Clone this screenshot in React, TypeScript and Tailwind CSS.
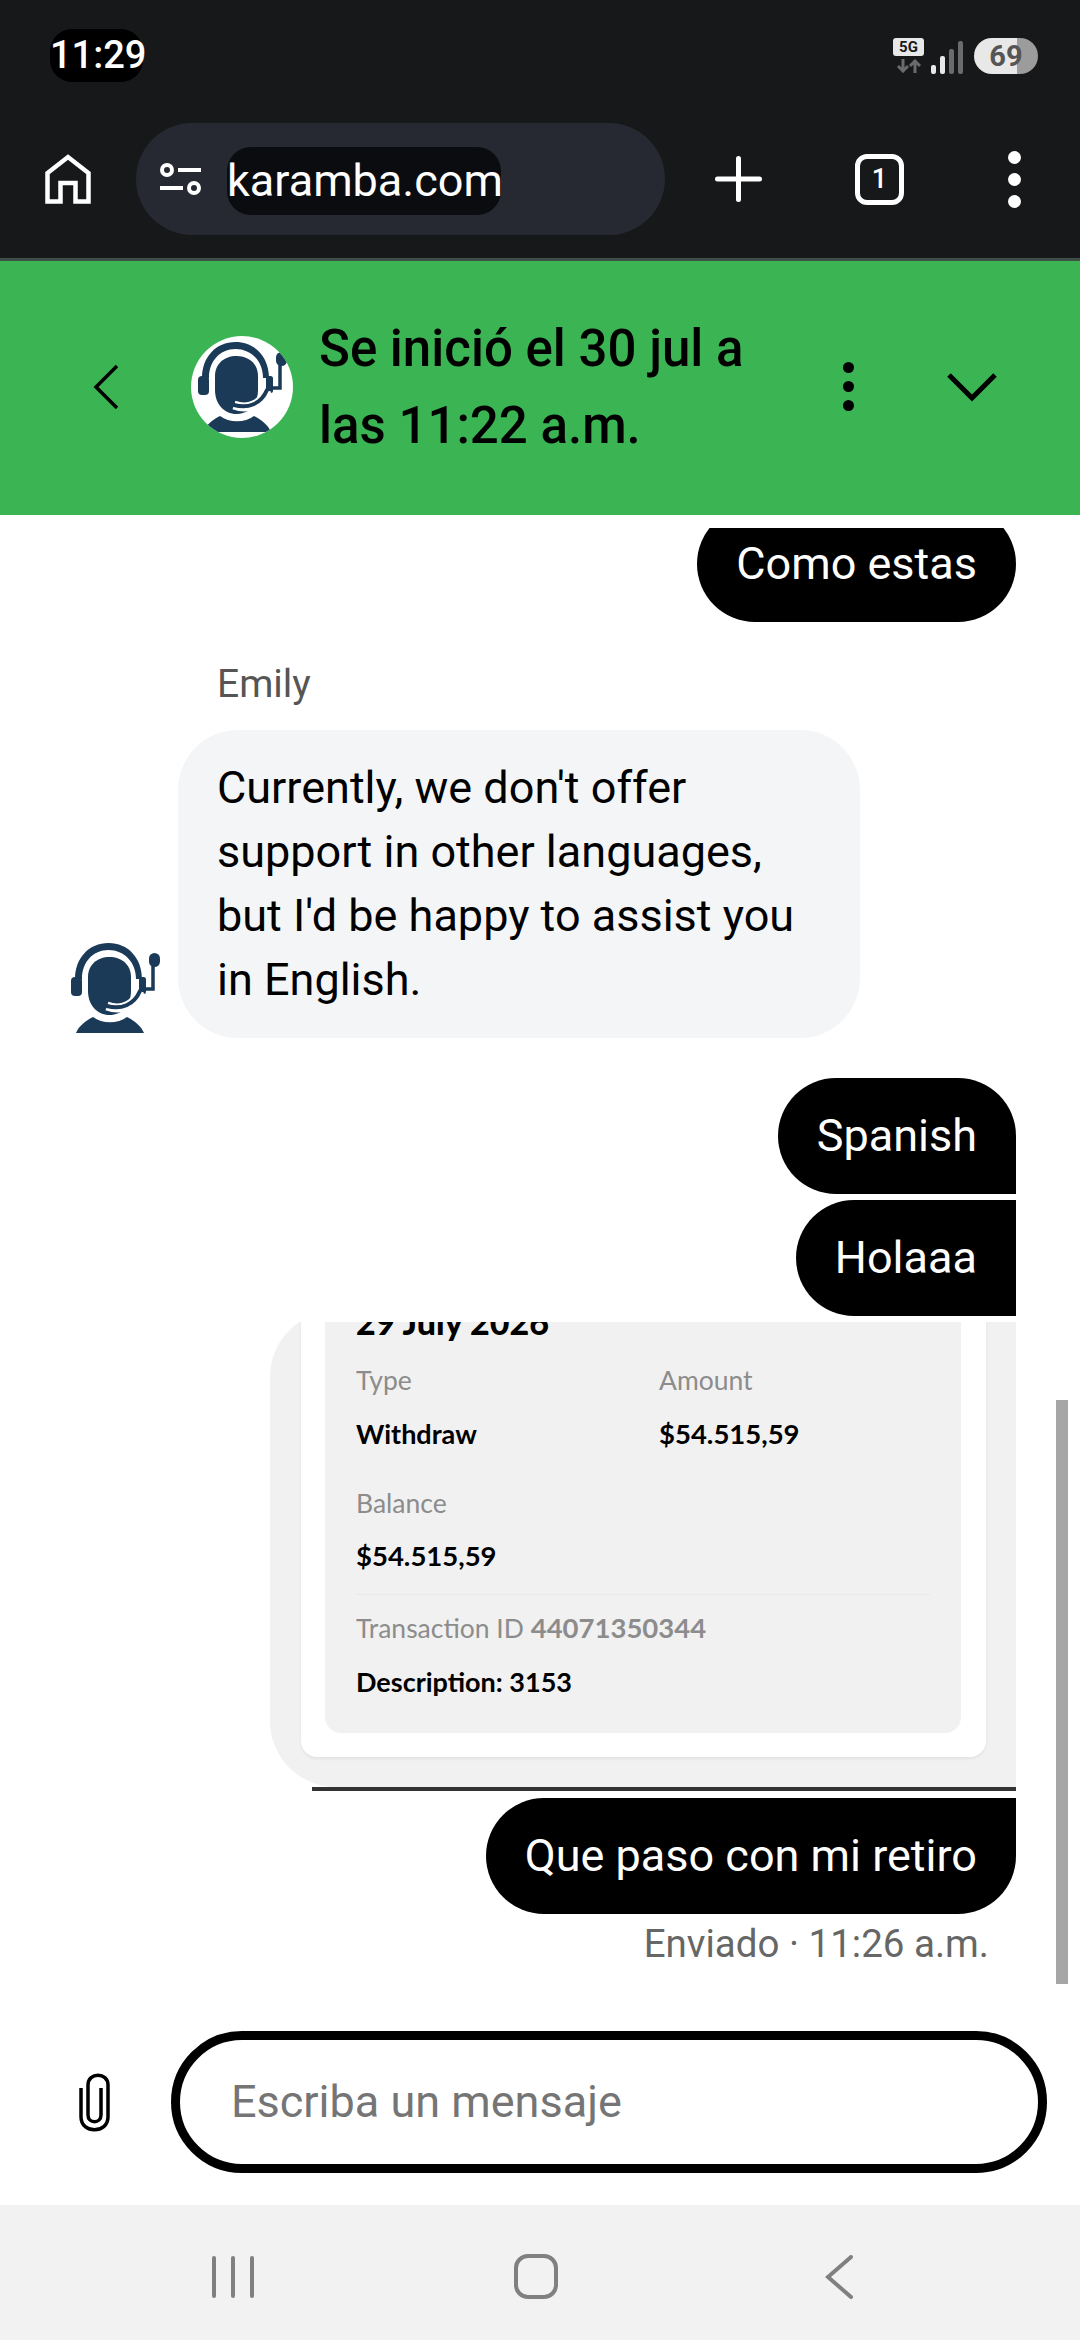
const ROBOTO = "font-['Roboto',sans-serif]";

function AgentIcon({ className }: { className?: string }) {
  return (
    <svg viewBox="0 0 90 90" className={className} fill="#1a3a57">
      {/* headband */}
      <path d="M5 36C5 15 19 0 38.500 0S72 15 72 36h-6C66 19 54 7 38.500 7S12 19 12 36z" />
      {/* ear cups */}
      <rect x="1" y="34" width="11" height="19" rx="4" />
      <rect x="69" y="34" width="7" height="17" rx="2.500" />
      {/* head */}
      <path d="M18 34c0-12 9-20 21.500-20S61 22 61 34v14c0 14-9 24-21.500 24S18 62 18 48z" />
      {/* mic boom */}
      <path d="M37 63c14 5 27 0 33-15" fill="none" stroke="#fff" strokeWidth="9" />
      <path d="M37 63c14 4 27-1 33-15" fill="none" stroke="#1a3a57" strokeWidth="4" strokeLinecap="round" />
      <path d="M74 46h9V22" fill="none" stroke="#1a3a57" strokeWidth="3.500" />
      <rect x="79" y="10" width="11" height="14" rx="5.500" />
      {/* shoulders */}
      <path d="M6 90c3-7 9-12 17-16 9 7 25 7 34 0 8 4 14 9 17 16z" />
    </svg>
  );
}

function HomeIcon() {
  return (
    <svg viewBox="0 0 46 50" className="w-[46px] h-[50px]" fill="none" stroke="#fff" strokeWidth="4.5">
      <path d="M2.500 47.500V19L23 3l20.500 16v28.500H30.500V29h-15v18.500z" />
    </svg>
  );
}

function TuneIcon() {
  return (
    <svg viewBox="0 0 41 34" className="w-[41px] h-[34px]" fill="none" stroke="#fff" strokeWidth="4">
      <circle cx="7" cy="8" r="5" />
      <path d="M18 8h23" />
      <circle cx="34" cy="26" r="5" />
      <path d="M0 26h23" />
    </svg>
  );
}

function StatusIcons() {
  return (
    <div className="flex items-start">
      <div className="w-[31px] flex flex-col items-center">
        <div className="w-[31px] h-[18px] rounded-[3px] bg-[#e8e8e8] text-[#17181a] text-[15px] leading-[18px] font-bold text-center font-['Roboto',sans-serif]">
          5G
        </div>
        <svg viewBox="0 0 24 14" className="w-[24px] h-[14px] mt-[3px]" fill="none" stroke="#6b6b6b" strokeWidth="3">
          <path d="M6 0v12M1 7l5 5 5-5M18 14V2M13 7l5-5 5 5" />
        </svg>
      </div>
      <div className="flex items-end gap-[4px] ml-[7px] h-[34px] mt-[2px]">
        <div className="w-[5px] h-[9px] rounded-[2px] bg-[#e8e8e8]" />
        <div className="w-[5px] h-[18px] rounded-[2px] bg-[#e8e8e8]" />
        <div className="w-[5px] h-[25px] rounded-[2px] bg-[#6b6b6b]" />
        <div className="w-[5px] h-[33px] rounded-[2px] bg-[#6b6b6b]" />
      </div>
      <div className="ml-[11px] w-[64px] h-[36px] rounded-full overflow-hidden flex relative">
        <div className="w-[43px] bg-[#e8e8e8]" />
        <div className="flex-1 bg-[#9c9c9c]" />
        <span className="absolute inset-0 text-center text-[#555] text-[29px] leading-[36px] font-bold font-['Roboto',sans-serif]">
          69
        </span>
      </div>
    </div>
  );
}

function BrowserBar() {
  return (
    <div className={`bg-[#17181a] h-[261px] border-b-[3px] border-[#3e4f47] text-white ${ROBOTO}`}>
      <div className="flex items-center justify-between pl-[50px] pr-[42px] pt-[29px]">
        <div className="w-[93px] h-[53px] rounded-[22px] bg-black text-center text-[38px] leading-[53px] font-medium">
          11:29
        </div>
        <StatusIcons />
      </div>
      <div className="flex items-center mt-[41px] pl-[45px]">
        <HomeIcon />
        <div className="ml-[45px] w-[529px] h-[112px] rounded-full bg-[#262932] flex items-center pl-[24px]">
          <TuneIcon />
          <div className="ml-[26px] mt-[3px] w-[274px] h-[68px] rounded-[24px] bg-[#0b0c10] text-center text-[45px] leading-[68px] whitespace-nowrap">
            karamba.com
          </div>
        </div>
        <svg viewBox="0 0 47 46" className="ml-[50px] w-[47px] h-[46px]" fill="none" stroke="#fff" strokeWidth="5" strokeLinecap="round">
          <path d="M23.500 2.500v41M2.500 23h42" />
        </svg>
        <div className="ml-[93px] w-[49px] h-[51px] rounded-[12px] border-[5px] border-white text-center text-[27px] leading-[41px] font-medium">
          1
        </div>
        <div className="ml-[104px] flex flex-col gap-[9px]">
          <div className="w-[13px] h-[13px] rounded-full bg-white" />
          <div className="w-[13px] h-[13px] rounded-full bg-white" />
          <div className="w-[13px] h-[13px] rounded-full bg-white" />
        </div>
      </div>
    </div>
  );
}

function ChatHeader() {
  return (
    <div className={`bg-[#3bb454] h-[254px] pb-[3px] flex items-center text-black ${ROBOTO}`}>
      <svg viewBox="0 0 26 46" className="ml-[93px] w-[26px] h-[46px]" fill="none" stroke="#000" strokeWidth="3.500">
        <path d="M24 2L3 23l21 21" />
      </svg>
      <div className="ml-[72px] w-[102px] h-[102px] rounded-full bg-white flex items-center justify-center overflow-hidden">
        <AgentIcon className="w-[90px] h-[92px]" />
      </div>
      <div className="ml-[26px] w-[524px] text-[51px] leading-[77px] font-medium">
        Se inició el 30 jul a<br />las 11:22 a.m.
      </div>
      <div className="flex flex-col gap-[8px]">
        <div className="w-[11px] h-[11px] rounded-full bg-black" />
        <div className="w-[11px] h-[11px] rounded-full bg-black" />
        <div className="w-[11px] h-[11px] rounded-full bg-black" />
      </div>
      <svg viewBox="0 0 50 30" className="ml-[93px] w-[50px] h-[30px]" fill="none" stroke="#000" strokeWidth="5">
        <path d="M2 3l23 23L48 3" />
      </svg>
    </div>
  );
}

function UserBubble({ children, className }: { children: string; className: string }) {
  return (
    <div className={`self-end bg-black text-white text-[45px] leading-[116px] h-[116px] px-[39px] whitespace-nowrap ${className}`}>
      {children}
    </div>
  );
}

function TransactionCard() {
  return (
    <div className="self-end shrink-0 mt-[6px] w-[746px] h-[469px] overflow-hidden font-['Lato',sans-serif] text-black flex flex-col">
      <div className="shrink-0 h-[476px] mt-[-11px] rounded-l-[66px] bg-[#f1f1f1] pl-[31px]">
        <div className="w-[685px] h-[446px] bg-white rounded-b-[16px] pl-[24px] shadow-[0_2px_3px_rgba(0,0,0,0.06)]">
          <div className="w-[636px] h-[422px] bg-[#f1f1f1] rounded-b-[16px] px-[31px] overflow-hidden">
            <div className="text-[34px] leading-[36px] font-black mt-[-7px]">29 July 2026</div>
            <div className="grid grid-cols-[303px_1fr] mt-[24px] text-[26.500px] leading-[32px]">
              <div className="text-[#8c8c8c]">Type</div>
              <div className="text-[#8c8c8c]">Amount</div>
              <div className="font-bold text-[27px] mt-[22px]">Withdraw</div>
              <div className="font-bold text-[27.500px] mt-[22px]">$54.515,59</div>
            </div>
            <div className="mt-[37px] text-[26.500px] leading-[32px] text-[#8c8c8c]">Balance</div>
            <div className="mt-[21px] text-[27.500px] leading-[32px] font-bold">$54.515,59</div>
            <div className="mt-[22px] h-[1px] bg-[#e9e9e9]" />
            <div className="mt-[17px] text-[26.500px] leading-[32px] text-[#8c8c8c]">
              Transaction ID <span className="font-bold text-[27.500px]">44071350344</span>
            </div>
            <div className="mt-[22px] text-[27px] leading-[32px] font-bold">Description: 3153</div>
          </div>
        </div>
      </div>
      <div className="shrink-0 h-[4px] ml-[42px] bg-[#333]" />
    </div>
  );
}

function Messages() {
  return (
    <div className={`relative h-[1490px] bg-white pt-[13px] ${ROBOTO}`}>
      <div className="h-full overflow-hidden pr-[64px] flex flex-col">
        <UserBubble className="shrink-0 mt-[-22px] rounded-[58px]">Como estas</UserBubble>
        <div className="mt-[38px] ml-[217px] text-[39px] leading-[48px] text-[#555]">Emily</div>
        <div className="mt-[22px] flex items-end">
          <AgentIcon className="ml-[70px] w-[90px] h-[90px] mb-[5px]" />
          <div className="ml-[18px] w-[682px] h-[308px] rounded-[60px] bg-[#f4f5f7] px-[39px] pt-[26px] text-[45px] leading-[64px] text-black">
            Currently, we don't offer support in other languages, but I'd be happy to assist you in English.
          </div>
        </div>
        <UserBubble className="shrink-0 mt-[40px] rounded-l-[58px] rounded-tr-[58px]">Spanish</UserBubble>
        <UserBubble className="shrink-0 mt-[6px] rounded-l-[58px]">Holaaa</UserBubble>
        <TransactionCard />
        <UserBubble className="shrink-0 mt-[7px] rounded-l-[58px] rounded-br-[58px]">Que paso con mi retiro</UserBubble>
        <div className="mt-[6px] self-end mr-[27px] text-[38.500px] leading-[48px] text-[#666]">Enviado · 11:26 a.m.</div>
      </div>
      {/* overlay scrollbar */}
      <div className="absolute right-[12px] top-[885px] w-[12px] h-[584px] bg-[#a6a6a6]" />
    </div>
  );
}

function Composer() {
  return (
    <div className={`bg-white h-[200px] pt-[26px] flex items-start ${ROBOTO}`}>
      <svg viewBox="0 0 31 59" className="ml-[79px] mt-[42px] w-[31px] h-[59px]" fill="none" stroke="#000" strokeWidth="3.500">
        <path d="M2 15v29c0 17 27 17 27 0V12C29-1 9-1 9 12v30c0 9 13 9 13 0V15" />
      </svg>
      <div className="ml-[61px] w-[876px] h-[142px] rounded-full border-[9px] border-black pl-[51px] text-[45px] leading-[124px] text-[#757575]">
        Escriba un mensaje
      </div>
    </div>
  );
}

function NavBar() {
  return (
    <div className="bg-[#f2f2f2] h-[135px] flex items-start">
      <div className="ml-[212px] mt-[51px] flex gap-[15px]">
        <div className="w-[4px] h-[42px] rounded-full bg-[#808080]" />
        <div className="w-[4px] h-[42px] rounded-full bg-[#808080]" />
        <div className="w-[4px] h-[42px] rounded-full bg-[#808080]" />
      </div>
      <div className="ml-[260px] mt-[49px] w-[44px] h-[45px] rounded-[14px] border-[4px] border-[#808080]" />
      <svg viewBox="0 0 28 44" className="ml-[267px] mt-[50px] w-[28px] h-[44px]" fill="none" stroke="#808080" strokeWidth="4" strokeLinecap="round">
        <path d="M26 2L3 22l23 20" />
      </svg>
    </div>
  );
}

export default function App() {
  return (
    <div className="w-[1080px] h-[2340px] overflow-hidden flex flex-col bg-white">
      <BrowserBar />
      <ChatHeader />
      <Messages />
      <Composer />
      <NavBar />
    </div>
  );
}
